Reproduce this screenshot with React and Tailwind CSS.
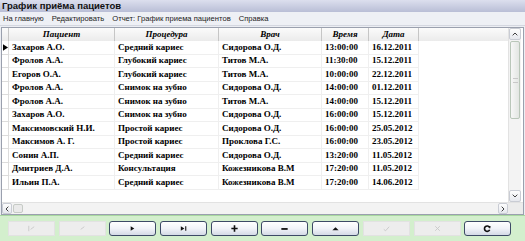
import React from "react";

const rows = [
    ["Захаров А.О.", "Средний кариес", "Сидорова О.Д.", "13:00:00", "16.12.2011"],
    ["Фролов А.А.", "Глубокий кариес", "Титов М.А.", "11:30:00", "15.12.2011"],
    ["Егоров О.А.", "Глубокий кариес", "Титов М.А.", "10:00:00", "22.12.2011"],
    ["Фролов А.А.", "Снимок на зубно", "Сидорова О.Д.", "14:00:00", "01.12.2011"],
    ["Фролов А.А.", "Снимок на зубно", "Титов М.А.", "14:00:00", "15.12.2011"],
    ["Захаров А.О.", "Снимок на зубно", "Сидорова О.Д.", "16:00:00", "15.12.2011"],
    ["Максимовский Н.И.", "Простой кариес", "Сидорова О.Д.", "16:00:00", "25.05.2012"],
    ["Максимов А. Г.", "Простой кариес", "Проклова Г.С.", "16:00:00", "23.05.2012"],
    ["Сонин А.П.", "Средний кариес", "Сидорова О.Д.", "13:20:00", "11.05.2012"],
    ["Дмитриев Д.А.", "Консультация", "Кожезникова В.М", "17:20:00", "11.05.2012"],
    ["Ильин П.А.", "Средний кариес", "Кожезникова В.М", "17:20:00", "14.06.2012"],
];

const cols = [
    { title: "Пациент", w: "w-[106px]" },
    { title: "Процедура", w: "w-[104px]" },
    { title: "Врач", w: "w-[103px]" },
    { title: "Время", w: "w-[47px]" },
    { title: "Дата", w: "w-[50px]" },
];

const Icon = ({ name, dim }) => {
    const c = dim ? "#c8c8c8" : "#111";
    const s = { width: 9, height: 9 };
    switch (name) {
        case "first":
            return (
                <svg viewBox="0 0 10 10" style={s}>
                    <path d="M2 2v6" stroke={c} strokeWidth="1" />
                    <path d="M8 3L4 6" stroke={c} strokeWidth="1" />
                </svg>
            );
        case "prev":
            return (
                <svg viewBox="0 0 10 10" style={s}>
                    <path d="M7 3L3 6" stroke={c} strokeWidth="1" />
                </svg>
            );
        case "next":
            return (
                <svg viewBox="0 0 10 10" style={s}>
                    <path d="M3 2.5L7 5L3 7.5Z" fill={c} />
                </svg>
            );
        case "last":
            return (
                <svg viewBox="0 0 10 10" style={s}>
                    <path d="M2 2.5L6 5L2 7.5Z" fill={c} />
                    <path d="M7.5 2.5v5" stroke={c} strokeWidth="1.2" />
                </svg>
            );
        case "plus":
            return (
                <svg viewBox="0 0 10 10" style={s}>
                    <path d="M5 1.5v7M1.5 5h7" stroke={c} strokeWidth="1.8" />
                </svg>
            );
        case "minus":
            return (
                <svg viewBox="0 0 10 10" style={s}>
                    <path d="M1.5 5.5h7" stroke={c} strokeWidth="2" />
                </svg>
            );
        case "up":
            return (
                <svg viewBox="0 0 10 10" style={s}>
                    <path d="M1.5 7L5 3.5L8.5 7Z" fill={c} />
                </svg>
            );
        case "check":
            return (
                <svg viewBox="0 0 10 10" style={s}>
                    <path d="M2 6L4 7.5L8 3" stroke={c} strokeWidth="1" fill="none" />
                </svg>
            );
        case "cancel":
            return (
                <svg viewBox="0 0 10 10" style={s}>
                    <path d="M2.5 2.5L7.5 7.5M7.5 2.5L2.5 7.5" stroke={c} strokeWidth="1" />
                </svg>
            );
        default:
            return (
                <svg viewBox="0 0 10 10" style={s}>
                    <path d="M7.2 3.6A3 3 0 1 0 7.4 6.4" stroke={c} strokeWidth="1.8" fill="none" />
                    <path d="M5.2 2.2L8.6 2.4L7.8 5.2Z" fill={c} />
                </svg>
            );
    }
};

const buttons = [
    ["first", true],
    ["prev", true],
    ["next", false],
    ["last", false],
    ["plus", false],
    ["minus", false],
    ["up", false],
    ["check", true],
    ["cancel", true],
    ["refresh", false],
];

const App = () => {
    return (
        <div className="w-[525px] h-[241px] overflow-hidden flex flex-col bg-[#eceef3] font-['Liberation_Sans',sans-serif] select-none">
            {/* title */}
            <div className="h-[12px] flex items-center px-[2px] bg-gradient-to-b from-[#dcdfee] to-[#b9bed6] text-[9.5px] font-bold text-[#111] leading-none">
                График приёма пациетов
            </div>

            {/* menu */}
            <div className="h-[14px] flex items-center gap-[8px] px-[3px] text-[7.6px] text-[#222] leading-none bg-[#eef0f5] border-b border-[#d4d7e0]">
                <span>На главную</span>
                <span>Редактировать</span>
                <span>Отчет: График приема пациентов</span>
                <span>Справка</span>
            </div>

            {/* grid */}
            <div className="mt-[1px] flex-1 flex flex-col bg-white border border-[#9aa0ae] mx-[1px]">
                <div className="flex-1 flex min-h-0">
                    <div className="flex-1 flex flex-col font-['Liberation_Serif',serif] text-[9px] font-bold text-black leading-none">
                        {/* header */}
                        <div className="h-[13px] flex bg-gradient-to-b from-[#fbfbfb] to-[#ebebeb]">
                            <div className="w-[7px] border-r border-[#c6c6c6]" />
                            {cols.map((c) => (
                                <div
                                    key={c.title}
                                    className={`${c.w} flex items-center justify-center italic border-r border-[#c6c6c6]`}
                                >
                                    {c.title}
                                </div>
                            ))}
                        </div>
                        {rows.map((r, i) => (
                            <div key={i} className="h-[13.5px] flex">
                                <div className="w-[7px] border-r border-b border-[#dcdcdc] flex items-center justify-center">
                                    {i === 0 && (
                                        <svg viewBox="0 0 6 8" width="5" height="7">
                                            <path d="M0 0L6 4L0 8Z" fill="#000" />
                                        </svg>
                                    )}
                                </div>
                                {cols.map((c, j) => (
                                    <div
                                        key={j}
                                        className={`${c.w} flex items-center pl-[3px] border-r border-b border-[#efefef] whitespace-nowrap overflow-hidden`}
                                    >
                                        {r[j]}
                                    </div>
                                ))}
                            </div>
                        ))}
                    </div>

                    {/* vertical scrollbar */}
                    <div className="w-[13px] mr-[2px] flex flex-col bg-[#f3f3f3] border-l border-[#e2e2e2]">
                        <div className="h-[12px] flex items-center justify-center bg-gradient-to-b from-[#fdfdfd] to-[#e6e8ee] border border-[#c9ccd4] rounded-[2px] text-[7px] text-[#333]">
                            <svg viewBox="0 0 8 6" width="6" height="4">
                                <path d="M0.5 5L4 1.5L7.5 5" stroke="#333" strokeWidth="1.4" fill="none" />
                            </svg>
                        </div>
                        <div className="flex-1 flex flex-col pt-[1px]">
                            <div className="h-[78px] mx-[1px] bg-gradient-to-r from-[#f7f7f7] to-[#e3e6e3] border border-[#b9c6b9] rounded-[2px] flex items-center justify-center">
                                <div className="w-[5px] h-[5px] border-y border-[#c8c8c8]" />
                            </div>
                        </div>
                        <div className="h-[12px] flex items-center justify-center bg-gradient-to-b from-[#fdfdfd] to-[#e6e8ee] border border-[#c9ccd4] rounded-[2px]">
                            <svg viewBox="0 0 8 6" width="6" height="4">
                                <path d="M0.5 1L4 4.5L7.5 1" stroke="#333" strokeWidth="1.4" fill="none" />
                            </svg>
                        </div>
                    </div>
                </div>

                {/* horizontal scrollbar */}
                <div className="h-[12px] flex bg-[#f3f3f3] border-t border-[#e2e2e2]">
                    <div className="w-[10px] flex items-center justify-center bg-gradient-to-b from-[#fdfdfd] to-[#e6e8ee] border border-[#c9ccd4] rounded-[2px]">
                        <svg viewBox="0 0 6 8" width="4" height="6">
                            <path d="M5 0.5L1.5 4L5 7.5" stroke="#333" strokeWidth="1.4" fill="none" />
                        </svg>
                    </div>
                    <div className="w-[10px] my-[1px] ml-[1px] bg-[#eaeaea] border border-[#c6cbc6] rounded-[2px]" />
                    <div className="flex-1" />
                    <div className="w-[10px] flex items-center justify-center bg-gradient-to-b from-[#fdfdfd] to-[#e6e8ee] border border-[#c9ccd4] rounded-[2px]">
                        <svg viewBox="0 0 6 8" width="4" height="6">
                            <path d="M1 0.5L4.5 4L1 7.5" stroke="#333" strokeWidth="1.4" fill="none" />
                        </svg>
                    </div>
                    <div className="w-[15px] bg-[#ececec]" />
                </div>
            </div>

            {/* navigator */}
            <div className="h-[26px] flex items-center gap-[3.7px] pl-[8px] bg-[#d3efcd] border-t border-[#a9d8a0]">
                {buttons.map(([name, dim]) => (
                    <div
                        key={name}
                        className={
                            dim
                                ? "w-[47px] h-[15px] flex items-center justify-center bg-[#ededed] border border-[#e2e2e2]"
                                : "w-[47px] h-[15px] flex items-center justify-center rounded-[3px] bg-gradient-to-b from-[#ffffff] via-[#f1f3f8] to-[#d4dae6] border border-[#3d4a66]"
                        }
                    >
                        <Icon name={name} dim={dim} />
                    </div>
                ))}
            </div>
        </div>
    );
};

export default App;
